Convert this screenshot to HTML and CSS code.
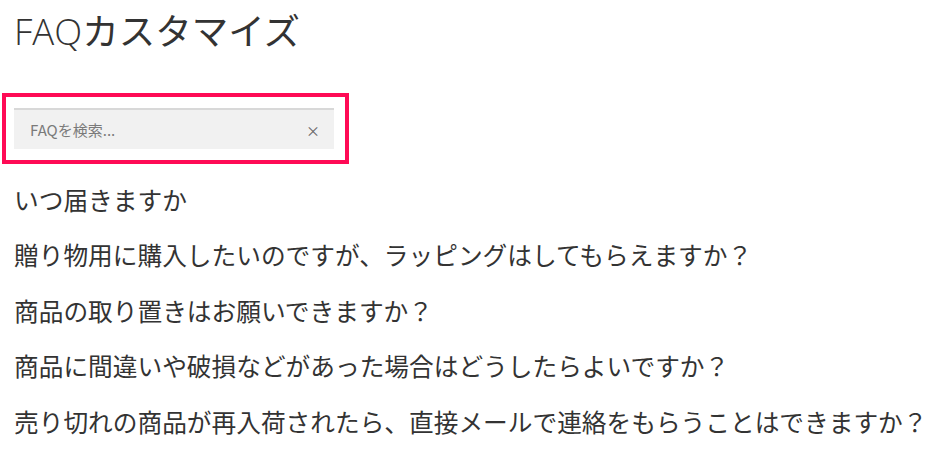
FILE: index.html
```html
<!DOCTYPE html>
<html lang="ja">
<head>
<meta charset="utf-8">
<title>FAQカスタマイズ</title>
<link rel="stylesheet" href="styles.css">
</head>
<body>
<div class="page">
  <h1 class="title"><span class="title-latin">FAQ</span>カスタマイズ</h1>
  <div class="search-frame">
    <div class="search-box">
      <span class="placeholder">FAQを検索...</span>
      <span class="clear">×</span>
    </div>
  </div>
  <ul class="faq-list">
    <li class="faq-item">いつ届きますか</li>
    <li class="faq-item">贈り物用に購入したいのですが、ラッピングはしてもらえますか？</li>
    <li class="faq-item">商品の取り置きはお願いできますか？</li>
    <li class="faq-item">商品に間違いや破損などがあった場合はどうしたらよいですか？</li>
    <li class="faq-item">売り切れの商品が再入荷されたら、直接メールで連絡をもらうことはできますか？</li>
  </ul>
</div>
</body>
</html>
```
FILE: styles.css
```css
html, body {
  margin: 0;
  padding: 0;
  background: #ffffff;
}
body {
  font-family: "Noto Sans CJK JP", "Open Sans", sans-serif;
  color: #333333;
}
.page {
  padding: 0 0 0 2px;
}
.title {
  margin: 0;
  padding: 4px 0 0 12px;
  font-size: 36.5px;
  font-weight: 400;
  line-height: 52px;
  color: #333333;
  letter-spacing: 0;
}
.title-latin {
  font-family: "Open Sans", sans-serif;
  font-weight: 300;
}
.search-frame {
  margin-top: 36px;
  width: 320px;
  border: 4px solid #ff0a55;
  padding: 11px 11px 11px 8px;
}
.search-box {
  height: 39px;
  background: #f1f1f1;
  border-top: 2px solid #d8d8d8;
  display: flex;
  align-items: center;
  justify-content: space-between;
  padding: 0 14px 0 16px;
}
.placeholder {
  font-size: 15px;
  color: #7a7a7a;
}
.clear {
  font-size: 14px;
  color: #666666;
}
.faq-list {
  list-style: none;
  margin: 8px 0 0 0;
  padding: 0 0 0 12px;
}
.faq-item {
  font-size: 24.7px;
  line-height: 55.4px;
  color: #333333;
  white-space: nowrap;
}
```
